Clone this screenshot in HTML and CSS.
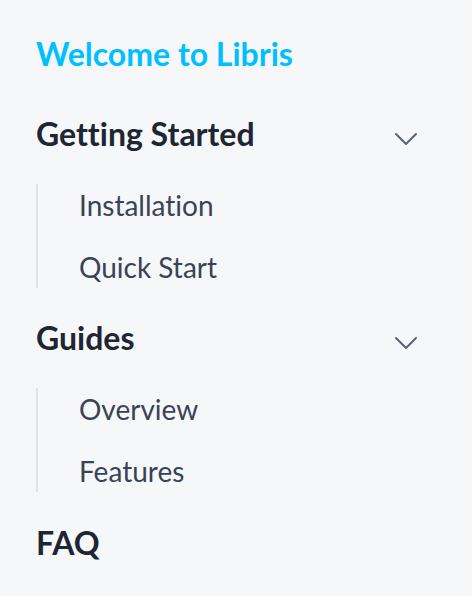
FILE: index.html
```html
<!DOCTYPE html>
<html lang="en">
<head>
<meta charset="utf-8">
<title>Libris</title>
<link rel="stylesheet" href="styles.css">
</head>
<body>
<nav class="sidebar">
  <a class="title" href="#">Welcome to Libris</a>
  <div class="group">
    <div class="group-head">
      <span>Getting Started</span>
      <svg class="chev" width="24" height="24" viewBox="0 0 24 24"><path d="M2 7 L12 17 L22 7" fill="none" stroke="currentColor" stroke-width="2" stroke-linecap="round" stroke-linejoin="round"/></svg>
    </div>
    <ul class="items">
      <li>Installation</li>
      <li>Quick Start</li>
    </ul>
  </div>
  <div class="group">
    <div class="group-head">
      <span>Guides</span>
      <svg class="chev" width="24" height="24" viewBox="0 0 24 24"><path d="M2 7 L12 17 L22 7" fill="none" stroke="currentColor" stroke-width="2" stroke-linecap="round" stroke-linejoin="round"/></svg>
    </div>
    <ul class="items">
      <li>Overview</li>
      <li>Features</li>
    </ul>
  </div>
  <div class="group-head faq"><span>FAQ</span></div>
</nav>
</body>
</html>
```
FILE: styles.css
```css
html, body {
  margin: 0;
  padding: 0;
  background: #f6f7f9;
}
body {
  font-family: Lato, "Open Sans", sans-serif;
  font-variant-ligatures: none;
  height: 596px;
}
.sidebar {
  display: flex;
  flex-direction: column;
  padding: 34px 54px 0 36px;
}
.title {
  font-size: 32px;
  font-weight: 700;
  line-height: 40px;
  color: #00bfff;
  text-decoration: none;
  margin-bottom: 40px;
}
.group {
  display: flex;
  flex-direction: column;
  margin-bottom: 30px;
}
.group-head {
  display: flex;
  justify-content: space-between;
  align-items: center;
  font-size: 32px;
  font-weight: 700;
  line-height: 40px;
  color: #1e2533;
}
.chev {
  color: #5b6477;
  margin-top: 10px;
}
.items {
  list-style: none;
  margin: 30px 0 0 0;
  padding: 0 0 0 41px;
  border-left: 2px solid #dde2eb;
  display: flex;
  flex-direction: column;
  gap: 20px;
}
.items li {
  font-size: 28px;
  line-height: 42px;
  color: #3a4356;
}
.faq {
  margin-top: 1px;
}
```
